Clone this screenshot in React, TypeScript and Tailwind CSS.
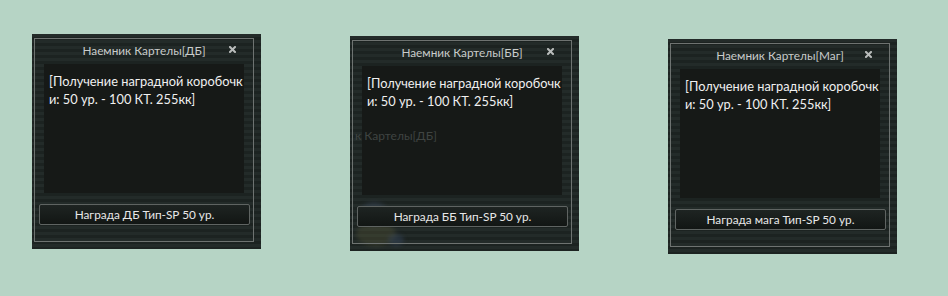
import React from "react";

function CloseIcon() {
  return (
    <svg width="7" height="7" viewBox="0 0 7 7" className="block">
      <path d="M1 1 L6 6 M6 1 L1 6" stroke="#b9bcbb" strokeWidth="2" strokeLinecap="square" />
    </svg>
  );
}

function GhostFigure() {
  return (
    <svg width="60" height="55" viewBox="0 0 60 55" className="block">
      <ellipse cx="22" cy="20" rx="14" ry="12" fill="#3b4a5e" opacity="0.45" />
      <ellipse cx="24" cy="40" rx="20" ry="12" fill="#5a5a3a" opacity="0.35" />
      <ellipse cx="44" cy="46" rx="8" ry="6" fill="#3a4a66" opacity="0.4" />
    </svg>
  );
}

type WinProps = {
  title: string;
  button: string;
  className: string;
  ghost?: boolean;
};

function Win({ title, button, className, ghost }: WinProps) {
  return (
    <div
      className={
        "relative shrink-0 w-[229px] pl-[2px] pt-[4px] pr-[7px] pb-[7px] bg-[repeating-linear-gradient(180deg,#232b29_0px,#232b29_3px,#1c2321_3px,#1c2321_6px)] " +
        className
      }
    >
      {ghost && (
        <div className="absolute left-[2px] bottom-[2px] blur-[2px]">
          <GhostFigure />
        </div>
      )}
      <div className="relative border border-[#6e7371] w-[220px] flex flex-col">
        <div className="relative h-[25px] flex items-center justify-center text-[11.8px] text-[#c9cccb] leading-none pb-[2px] whitespace-nowrap">
          <span>{title}</span>
          <div className="absolute right-[17px] top-[7px]">
            <CloseIcon />
          </div>
        </div>
        <div className="relative ml-[9px] w-[200px] h-[129px] bg-[#161917] pt-[8px] pl-[5px] text-[12.8px] leading-[18px] text-[#f0f0f0] whitespace-nowrap">
          {ghost && (
            <div className="absolute left-[-7px] top-[61px] text-[12px] text-[#3f4442]">
              к Картелы[ДБ]
            </div>
          )}
          <div className="relative">[Получение наградной коробочк</div>
          <div className="relative">и: 50 ур. - 100 КТ. 255кк]</div>
        </div>
        <div className="ml-[4px] mt-[11px] w-[211px] h-[21px] rounded-[2px] border border-[#5f6462] bg-[linear-gradient(180deg,#1e2422,#121614)] flex items-center justify-center text-[11.8px] text-[#e8e8e8] leading-none whitespace-nowrap">
          {button}
        </div>
        <div className="h-[16px]" />
      </div>
    </div>
  );
}

export default function App() {
  return (
    <div
      className="w-[948px] h-[296px] bg-[#b6d4c5] flex items-start pl-[32px]"
      style={{ fontFamily: 'Lato, "Noto Sans", sans-serif' }}
    >
      <Win title="Наемник Картелы[ДБ]" button="Награда ДБ Тип-SP 50 ур." className="mt-[34px]" />
      <Win title="Наемник Картелы[ББ]" button="Награда ББ Тип-SP 50 ур." className="ml-[89px] mt-[36px]" ghost />
      <Win title="Наемник Картелы[Маг]" button="Награда мага Тип-SP 50 ур." className="ml-[89px] mt-[39px]" />
    </div>
  );
}
